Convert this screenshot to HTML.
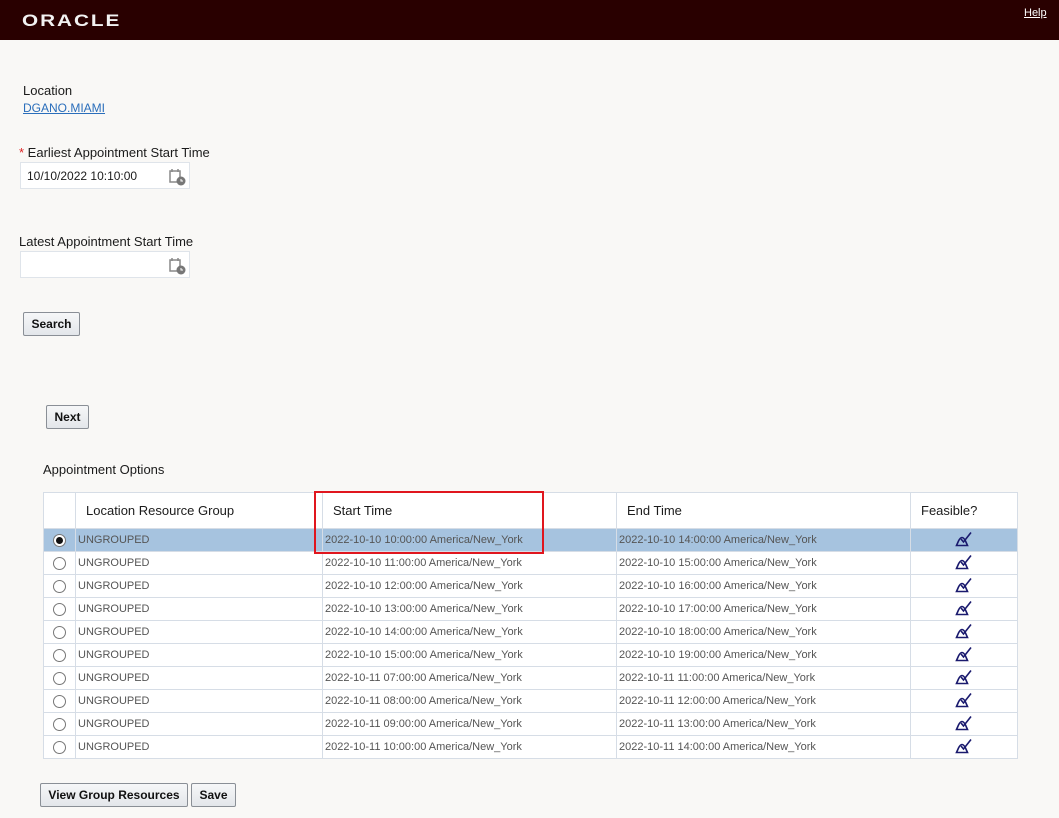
<!DOCTYPE html>
<html><head><style>
*{margin:0;padding:0;box-sizing:border-box}
body{width:1059px;height:818px;background:#f9f8f6;font-family:"Liberation Sans",sans-serif;position:relative;overflow:hidden;color:#1b1b1b}
.hdr{position:absolute;left:0;top:0;width:1059px;height:40px;background:#290000}
.logo{position:absolute;left:22px;top:11px;color:#f2f2f2;font-size:17px;font-weight:bold;letter-spacing:1.6px;transform:scaleX(1.22);transform-origin:left}
.help{position:absolute;left:1024px;top:7px;color:#fff;font-size:11px;text-decoration:underline}
.a{position:absolute;font-size:13px}
.inp{position:absolute;width:170px;height:27px;background:#fff;border:1px solid #dfe4ea;font-size:12px;padding:6px 0 0 6px}
.cal{position:absolute;right:3px;top:5px}
.btn{position:absolute;height:24px;background:linear-gradient(#f6f7f8,#e3e6ea);border:1px solid #8a8f96;border-radius:2px;font-size:12px;font-weight:bold;text-align:center;line-height:22px;color:#111}
table{position:absolute;left:43px;top:492px;border-collapse:collapse;background:#fff;width:975px}
td,th{border:1px solid #d6dde6;font-size:11px;color:#555;padding:0 2px;height:23px;white-space:nowrap}
th{height:36px;font-size:13px;font-weight:normal;color:#1b1b1b;text-align:left;padding-left:10px}
tr.sel td{background:#a6c3df}
.r{width:13px;height:13px;border:1px solid #777;border-radius:50%;margin:0 auto;background:#fff;position:relative}
.sel .r::after{content:"";position:absolute;left:2px;top:2px;width:7px;height:7px;border-radius:50%;background:#111}
.f{text-align:center}
.box{position:absolute;left:314px;top:491px;width:230px;height:63px;border:2px solid #e0161e}
</style></head><body>
<div class="hdr"><div class="logo">ORACLE</div><div class="help">Help</div></div>
<div class="a" style="left:23px;top:83px">Location</div>
<div class="a" style="left:23px;top:101px;font-size:12px;color:#2a6ebb;text-decoration:underline">DGANO.MIAMI</div>
<div class="a" style="left:19px;top:145px"><span style="color:#d22">*</span> Earliest Appointment Start Time</div>
<div class="inp" style="left:20px;top:162px">10/10/2022 10:10:00<svg class="cal" width="17" height="18" viewBox="0 0 17 18"><rect x="1" y="3" width="10" height="11" fill="none" stroke="#888" stroke-width="1.5"/><line x1="3" y1="1" x2="3" y2="4" stroke="#888" stroke-width="1.5"/><line x1="9" y1="1" x2="9" y2="4" stroke="#888" stroke-width="1.5"/><circle cx="12" cy="13" r="4.5" fill="#777"/><path d="M12 11v2h2" stroke="#fff" fill="none"/></svg></div>
<div class="a" style="left:19px;top:234px">Latest Appointment Start Time</div>
<div class="inp" style="left:20px;top:251px"><svg class="cal" width="17" height="18" viewBox="0 0 17 18"><rect x="1" y="3" width="10" height="11" fill="none" stroke="#888" stroke-width="1.5"/><line x1="3" y1="1" x2="3" y2="4" stroke="#888" stroke-width="1.5"/><line x1="9" y1="1" x2="9" y2="4" stroke="#888" stroke-width="1.5"/><circle cx="12" cy="13" r="4.5" fill="#777"/><path d="M12 11v2h2" stroke="#fff" fill="none"/></svg></div>
<div class="btn" style="left:23px;top:312px;width:57px">Search</div>
<div class="btn" style="left:46px;top:405px;width:43px">Next</div>
<div class="a" style="left:43px;top:462px">Appointment Options</div>
<table>
<tr><th style="width:32px"></th><th style="width:247px">Location Resource Group</th><th style="width:294px">Start Time</th><th style="width:294px">End Time</th><th>Feasible?</th></tr>
ROWS
</table>
<div class="box"></div>
<div class="btn" style="left:40px;top:783px;width:148px">View Group Resources</div>
<div class="btn" style="left:191px;top:783px;width:45px">Save</div>
<script>
var s=[["10 10","10 14"],["10 11","10 15"],["10 12","10 16"],["10 13","10 17"],["10 14","10 18"],["10 15","10 19"],["11 07","11 11"],["11 08","11 12"],["11 09","11 13"],["11 10","11 14"]];
var ic='<svg width="18" height="16" viewBox="0 0 18 16"><path d="M1.5 14.5 L3.5 10 Q7 3 10.5 10 L12.5 14.5 Z" fill="none" stroke="#1a1a6e" stroke-width="1.6"/><path d="M6 8 L8.5 11 L16 1.5" fill="none" stroke="#1a1a6e" stroke-width="1.6"/></svg>';
var h='';s.forEach(function(r,i){var a=r[0].split(' '),b=r[1].split(' ');h+='<tr'+(i==0?' class="sel"':'')+'><td><div class="r"></div></td><td>UNGROUPED</td><td>2022-10-'+a[0]+' '+a[1]+':00:00 America/New_York</td><td>2022-10-'+b[0]+' '+b[1]+':00:00 America/New_York</td><td class="f">'+ic+'</td></tr>';});
document.querySelector('table').innerHTML=document.querySelector('table').innerHTML.replace('ROWS','')+h;
</script>
</body></html>
